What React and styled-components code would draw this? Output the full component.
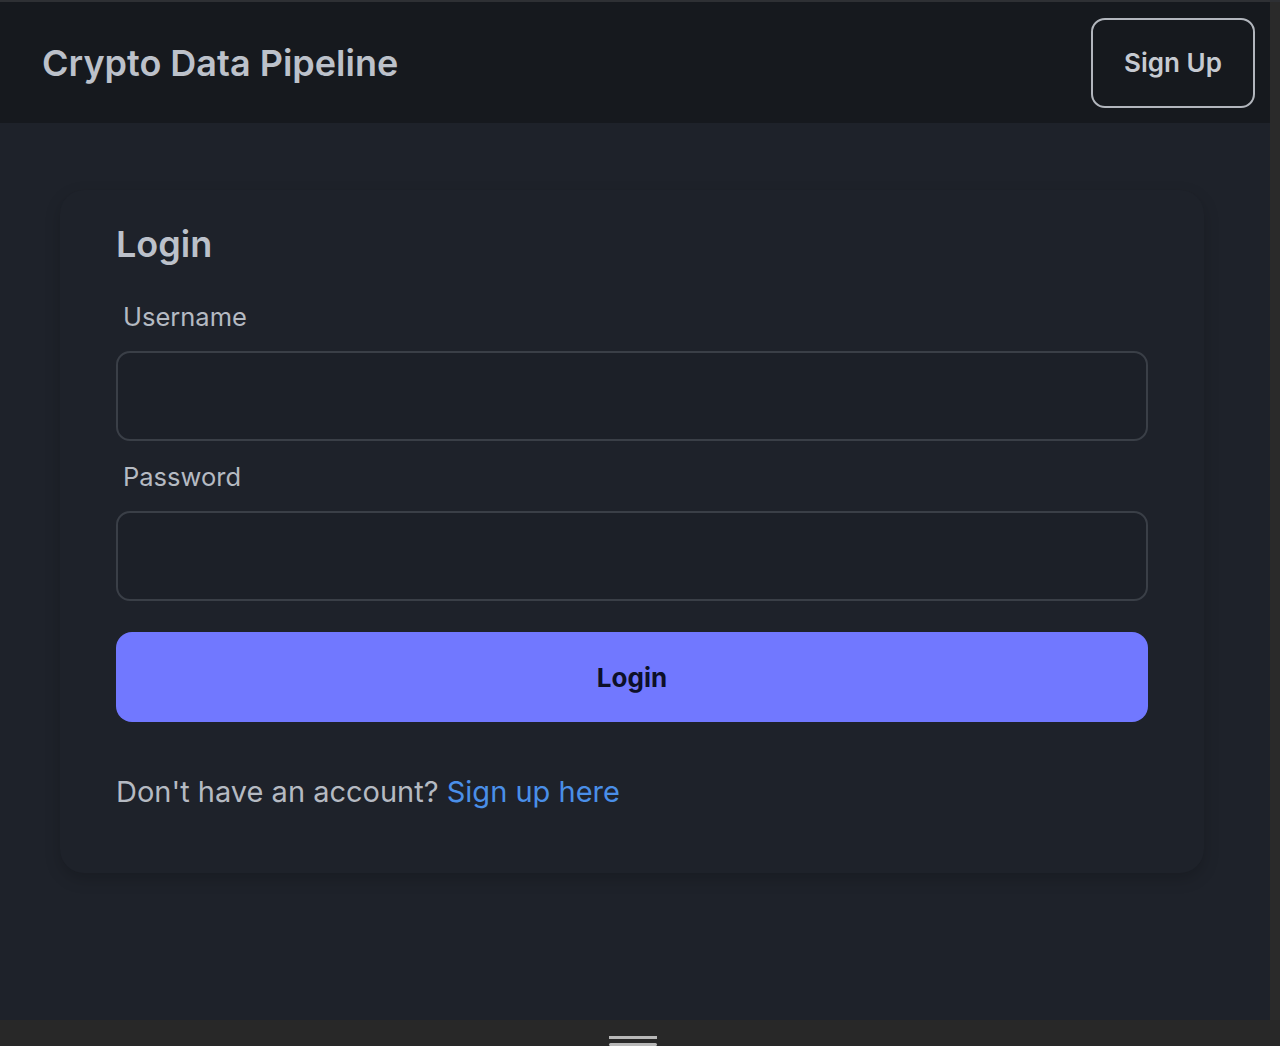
import React from 'react';
import styled, { createGlobalStyle } from 'styled-components';

const GlobalStyle = createGlobalStyle`
  * {
    box-sizing: border-box;
  }

  body {
    margin: 0;
    background: #282828;
    font-family: Inter, "Noto Sans", "Liberation Sans", sans-serif;
  }
`;

const Frame = styled.div`
  height: 100vh;
  display: flex;
  flex-direction: column;
  border-top: 2px solid #2e3034;
  background: #2a2a2a;
`;

const Screen = styled.div`
  flex: 1;
  display: flex;
  flex-direction: column;
  margin-right: 10px;
  background: #1e222a;
`;

const Header = styled.header`
  height: 121px;
  display: flex;
  align-items: center;
  justify-content: space-between;
  padding: 0 15px 0 42px;
  background: #16191e;
`;

const Brand = styled.h1`
  margin: 0;
  font-size: 36px;
  font-weight: 600;
  letter-spacing: 0;
  color: #bcc1ca;
`;

const OutlineButton = styled.button`
  width: 164px;
  height: 90px;
  border: 2px solid #b2b6bd;
  border-radius: 14px;
  background: transparent;
  color: #c6cad1;
  font-family: inherit;
  font-size: 26px;
  font-weight: 600;
  cursor: pointer;
`;

const Main = styled.main`
  flex: 1;
  padding: 67px 66px 0 60px;
`;

const Card = styled.section`
  padding: 31px 56px 59px;
  border-radius: 24px;
  background: #1e222a;
  box-shadow: 0 6px 16px rgba(0, 0, 0, 0.18);
`;

const Title = styled.h2`
  margin: 0 0 30px;
  font-size: 36px;
  line-height: 46px;
  font-weight: 600;
  color: #bcc1ca;
`;

const Form = styled.form`
  display: flex;
  flex-direction: column;
`;

const Label = styled.label`
  padding-left: 7px;
  margin-bottom: 15px;
  font-size: 25.5px;
  line-height: 39px;
  color: #b5bac2;
`;

const Input = styled.input`
  height: 90px;
  margin-bottom: ${(p) => p.$gap}px;
  padding: 0 24px;
  border: 2px solid #3a3f47;
  border-radius: 14px;
  background: #1c2028;
  color: #d0d4da;
  font-family: inherit;
  font-size: 26px;
  outline: none;
`;

const SubmitButton = styled.button`
  height: 90px;
  border: none;
  border-radius: 16px;
  background: #7178ff;
  color: #0d1029;
  font-family: inherit;
  font-size: 26px;
  font-weight: 700;
  cursor: pointer;
`;

const Footnote = styled.p`
  margin: 48px 0 0;
  font-size: 29px;
  line-height: 44px;
  color: #b5bac2;
`;

const Link = styled.a`
  color: #4a8fe8;
  text-decoration: none;
`;

const BottomBar = styled.div`
  height: 26px;
  display: flex;
  justify-content: center;
  align-items: flex-end;
  padding-right: 14px;
  background: #282828;
`;

const Handle = styled.div`
  width: 48px;
  height: 10px;
  border-top: 3px solid #b8b8b8;
  position: relative;

  &::after {
    content: '';
    position: absolute;
    left: 0;
    right: 0;
    top: 4px;
    height: 3px;
    border-radius: 2px;
    background: #b8b8b8;
  }
`;

const App = () => (
  <>
    <GlobalStyle />
    <Frame>
      <Screen>
        <Header>
          <Brand>Crypto Data Pipeline</Brand>
          <OutlineButton>Sign Up</OutlineButton>
        </Header>
        <Main>
          <Card>
            <Title>Login</Title>
            <Form onSubmit={(e) => e.preventDefault()}>
              <Label htmlFor="username">Username</Label>
              <Input id="username" type="text" $gap={16} />
              <Label htmlFor="password">Password</Label>
              <Input id="password" type="password" $gap={31} />
              <SubmitButton type="submit">Login</SubmitButton>
            </Form>
            <Footnote>
              Don't have an account? <Link href="#">Sign up here</Link>
            </Footnote>
          </Card>
        </Main>
      </Screen>
      <BottomBar>
        <Handle />
      </BottomBar>
    </Frame>
  </>
);

export default App;
